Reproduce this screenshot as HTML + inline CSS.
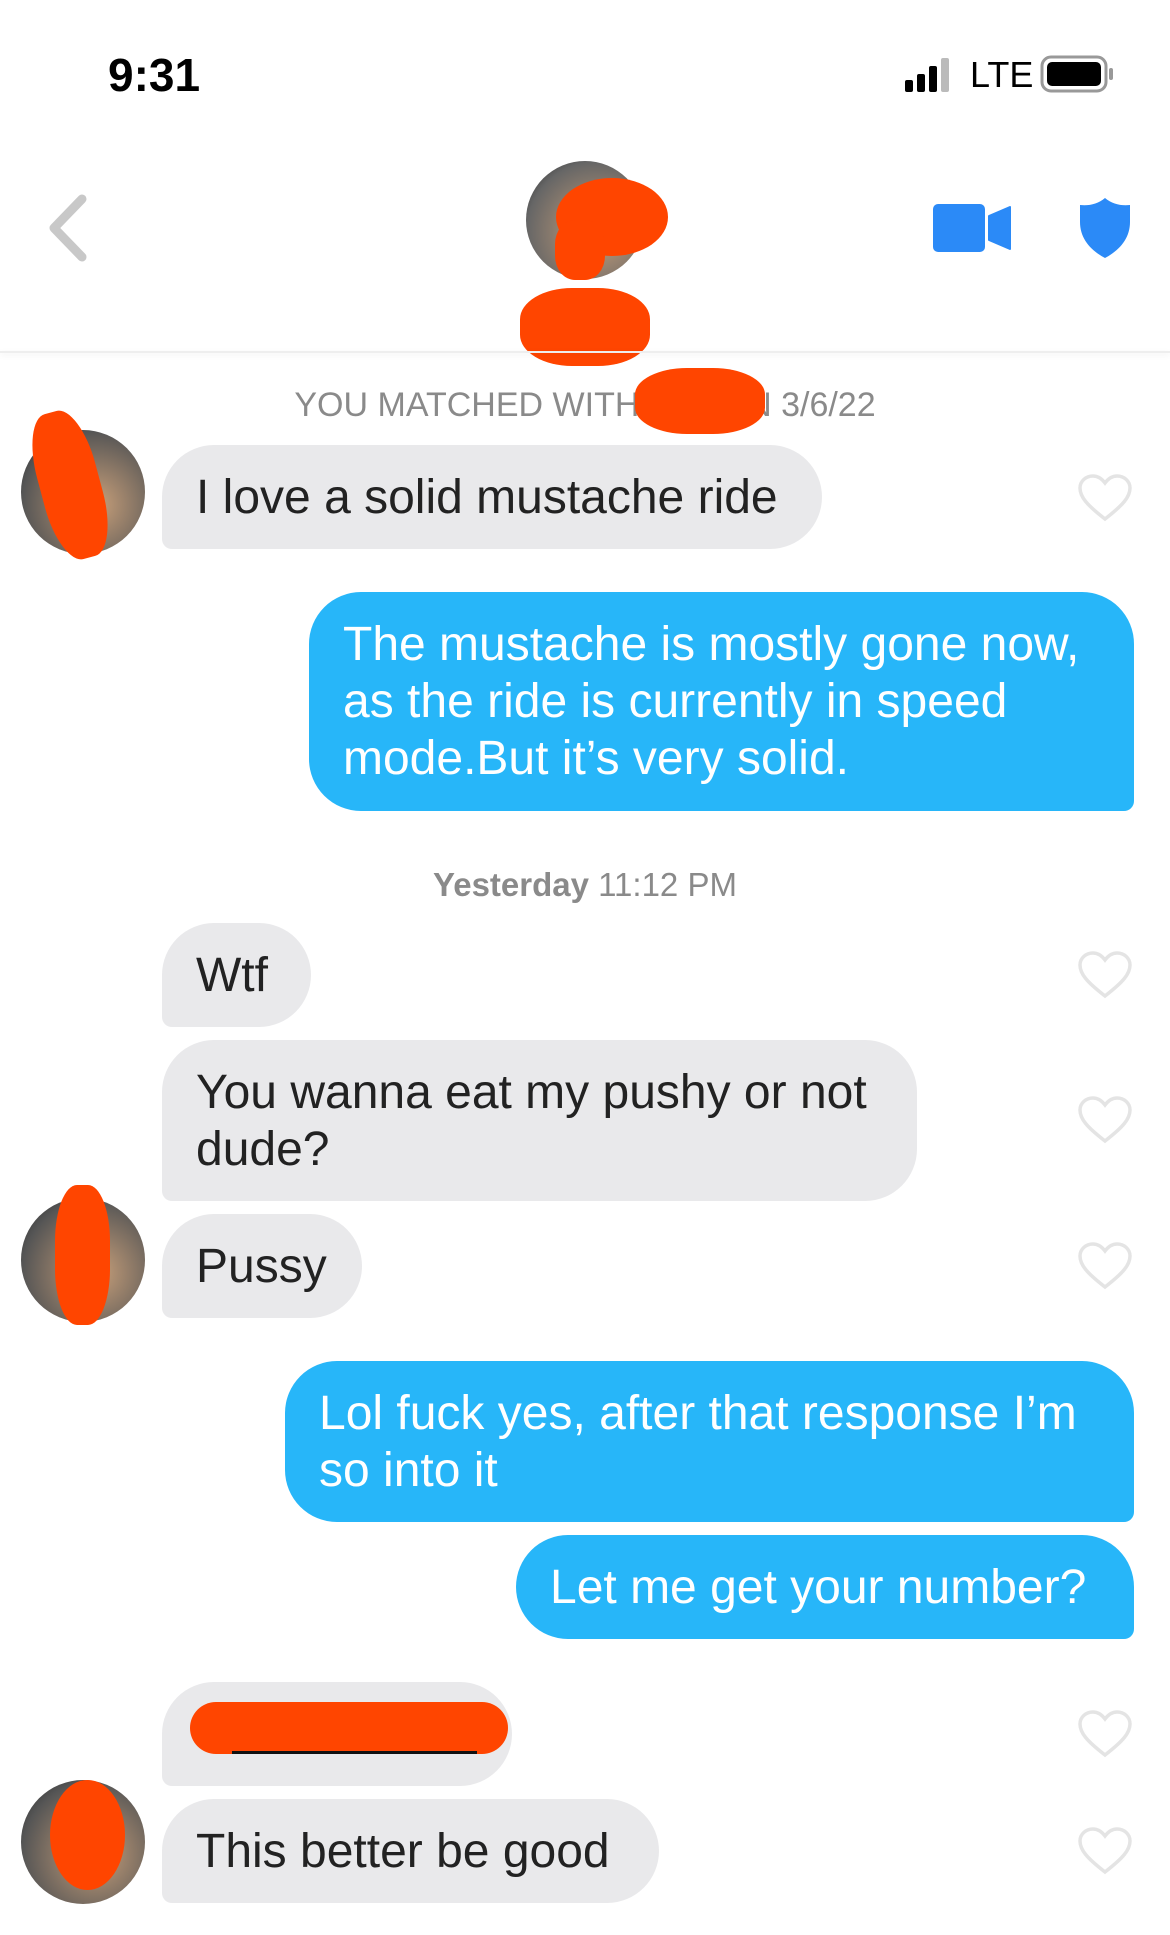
<!DOCTYPE html>
<html><head><meta charset="utf-8"><style>
*{margin:0;padding:0;box-sizing:border-box}
body{width:1170px;height:1935px;background:#fff;position:relative;overflow:hidden;font-family:"Liberation Sans",sans-serif}
.a{position:absolute}
.g{position:absolute;background:#e9e9eb;color:#222;font-size:48px;border-radius:52px 52px 52px 10px;padding:0 34px;display:flex;align-items:center;line-height:57px}
.b{position:absolute;background:#27b6f9;color:#fff;font-size:48px;border-radius:52px 52px 10px 52px;padding:0 34px;line-height:57px;display:flex;align-items:center}
.h{position:absolute;left:1077px;width:56px;height:50px}
.av{position:absolute;left:21px;width:124px;height:124px;border-radius:50%;background:radial-gradient(circle at 60% 60%,#c9a07a,#555 70%,#222);overflow:hidden}
.red{position:absolute;background:#ff4500;border-radius:40%}
</style></head><body>
<div class="a" style="left:108px;top:48px;font-size:46px;font-weight:bold;color:#000">9:31</div>
<svg class="a" style="left:905px;top:58px" width="50" height="34"><rect x="0" y="22" width="8" height="12" rx="2" fill="#000"/><rect x="12" y="16" width="8" height="18" rx="2" fill="#000"/><rect x="24" y="8" width="8" height="26" rx="2" fill="#000"/><rect x="36" y="0" width="8" height="34" rx="2" fill="#bbb"/></svg>
<div class="a" style="left:970px;top:54px;font-size:36px;color:#000">LTE</div>
<svg class="a" style="left:1040px;top:55px" width="75" height="38"><rect x="2" y="2" width="64" height="34" rx="9" fill="none" stroke="#999" stroke-width="3"/><rect x="7" y="7" width="54" height="24" rx="5" fill="#000"/><rect x="69" y="13" width="4" height="12" rx="2" fill="#999"/></svg>
<svg class="a" style="left:44px;top:193px" width="46" height="70"><path d="M38 6 L10 35 L38 64" fill="none" stroke="#c8c8c8" stroke-width="9" stroke-linecap="round" stroke-linejoin="round"/></svg>
<div class="a" style="left:526px;top:161px;width:118px;height:118px;border-radius:50%;background:radial-gradient(circle at 60% 60%,#c9a07a,#666 70%,#222)"></div>
<div class="red" style="left:556px;top:178px;width:112px;height:78px;border-radius:50%"></div>
<div class="red" style="left:555px;top:220px;width:50px;height:60px"></div>
<div class="red" style="left:520px;top:288px;width:130px;height:78px;border-radius:40%"></div>
<svg class="a" style="left:932px;top:203px" width="82" height="50"><rect x="1" y="1" width="52" height="48" rx="5" fill="#2b8af7"/><path d="M57 13 L78 4 L78 46 L57 37Z" fill="#2b8af7" stroke="#2b8af7" stroke-width="2" stroke-linejoin="round"/></svg>
<svg class="a" style="left:1076px;top:196px" width="58" height="64"><path d="M29 2 C22 8 13 10 4 9 L4 26 C4 42 14 54 29 62 C44 54 54 42 54 26 L54 9 C45 10 36 8 29 2Z" fill="#2b8af7"/></svg>
<div class="a" style="left:0;top:351px;width:1170px;height:2px;background:#eee;box-shadow:0 2px 6px rgba(0,0,0,.08)"></div>
<div class="a" style="left:0;top:386px;width:1170px;text-align:center;font-size:34px;color:#8a8a8a">YOU MATCHED WITH K&nbsp;&nbsp;&nbsp;&nbsp;&nbsp;&nbsp;&nbsp;&nbsp;N 3/6/22</div>
<div class="red" style="left:635px;top:368px;width:130px;height:66px"></div>

<div class="av" style="top:430px"></div><div class="red" style="left:40px;top:410px;width:60px;height:150px;transform:rotate(-15deg)"></div>
<div class="g" style="left:162px;top:445px;width:660px;height:104px">I love a solid mustache ride</div>
<div class="b" style="left:309px;top:592px;width:825px;height:219px">The mustache is mostly gone now, as the ride is currently in speed mode.But it’s very solid.</div>
<div class="a" style="left:0;top:866px;width:1170px;text-align:center;font-size:33px;color:#8a8a8a"><b>Yesterday</b> 11:12 PM</div>
<div class="g" style="left:162px;top:923px;width:149px;height:104px">Wtf</div>
<div class="g" style="left:162px;top:1040px;width:755px;height:161px">You wanna eat my pushy or not dude?</div>
<div class="av" style="top:1198px"></div><div class="red" style="left:55px;top:1185px;width:55px;height:140px"></div>
<div class="g" style="left:162px;top:1214px;width:200px;height:104px">Pussy</div>
<div class="b" style="left:285px;top:1361px;width:849px;height:161px">Lol fuck yes, after that response I’m so into it</div>
<div class="b" style="left:516px;top:1535px;width:618px;height:104px;white-space:nowrap">Let me get your number?</div>
<div class="g" style="left:162px;top:1682px;width:350px;height:104px"></div>
<div class="red" style="left:190px;top:1702px;width:318px;height:52px;border-radius:30px"></div>
<div class="a" style="left:232px;top:1751px;width:245px;height:3px;background:#111"></div>
<div class="av" style="top:1780px"></div><div class="red" style="left:50px;top:1780px;width:75px;height:110px;border-radius:50%"></div>
<div class="g" style="left:162px;top:1799px;width:497px;height:104px">This better be good</div>

<svg class="h" style="top:473px" viewBox="0 0 56 50"><path d="M28 46 C10 32 3 24 3 15 C3 8 9 3 16 3 C21 3 25 6 28 10 C31 6 35 3 40 3 C47 3 53 8 53 15 C53 24 46 32 28 46Z" fill="none" stroke="#e4e4e4" stroke-width="3.5"/></svg>
<svg class="h" style="top:950px" viewBox="0 0 56 50"><path d="M28 46 C10 32 3 24 3 15 C3 8 9 3 16 3 C21 3 25 6 28 10 C31 6 35 3 40 3 C47 3 53 8 53 15 C53 24 46 32 28 46Z" fill="none" stroke="#e4e4e4" stroke-width="3.5"/></svg>
<svg class="h" style="top:1095px" viewBox="0 0 56 50"><path d="M28 46 C10 32 3 24 3 15 C3 8 9 3 16 3 C21 3 25 6 28 10 C31 6 35 3 40 3 C47 3 53 8 53 15 C53 24 46 32 28 46Z" fill="none" stroke="#e4e4e4" stroke-width="3.5"/></svg>
<svg class="h" style="top:1241px" viewBox="0 0 56 50"><path d="M28 46 C10 32 3 24 3 15 C3 8 9 3 16 3 C21 3 25 6 28 10 C31 6 35 3 40 3 C47 3 53 8 53 15 C53 24 46 32 28 46Z" fill="none" stroke="#e4e4e4" stroke-width="3.5"/></svg>
<svg class="h" style="top:1709px" viewBox="0 0 56 50"><path d="M28 46 C10 32 3 24 3 15 C3 8 9 3 16 3 C21 3 25 6 28 10 C31 6 35 3 40 3 C47 3 53 8 53 15 C53 24 46 32 28 46Z" fill="none" stroke="#e4e4e4" stroke-width="3.5"/></svg>
<svg class="h" style="top:1826px" viewBox="0 0 56 50"><path d="M28 46 C10 32 3 24 3 15 C3 8 9 3 16 3 C21 3 25 6 28 10 C31 6 35 3 40 3 C47 3 53 8 53 15 C53 24 46 32 28 46Z" fill="none" stroke="#e4e4e4" stroke-width="3.5"/></svg>
</body></html>
